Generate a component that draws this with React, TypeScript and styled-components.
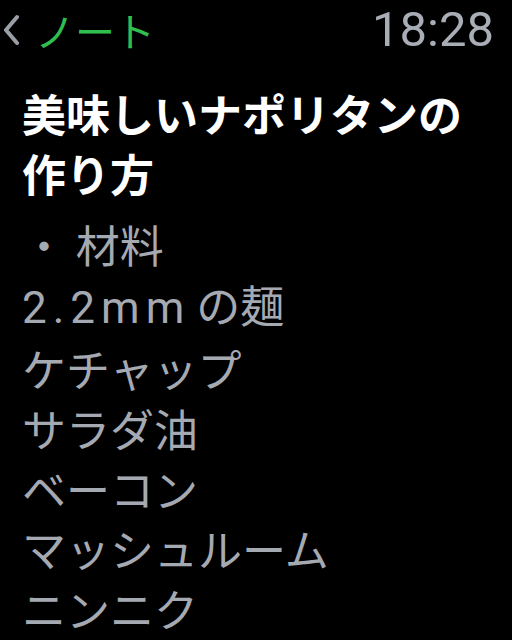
import React from 'react';
import styled, { createGlobalStyle } from 'styled-components';

const GlobalStyle = createGlobalStyle`
  html, body {
    margin: 0;
    padding: 0;
    background: #000;
  }
  body {
    width: 512px;
    height: 640px;
    overflow: hidden;
    font-family: "Noto Sans CJK JP", "Noto Sans", sans-serif;
  }
`;

const Screen = styled.div`
  width: 512px;
  height: 640px;
  background: #000;
  overflow: hidden;
`;

const Header = styled.header`
  display: flex;
  align-items: center;
  justify-content: space-between;
  height: 60px;
  padding: 0 18px 0 3px;
`;

const BackButton = styled.div`
  display: flex;
  align-items: center;
  gap: 16px;
`;

const BackLabel = styled.span`
  color: #2fbf4f;
  font-size: 40px;
  line-height: 60px;
`;

const Clock = styled.span`
  color: #a9adb5;
  font-family: Roboto, "Liberation Sans", sans-serif;
  font-size: 49px;
  line-height: 60px;
`;

const Body = styled.main`
  padding: 23px 22px 0;
`;

const Title = styled.h1`
  margin: 0 0 11px;
  color: #fff;
  font-size: 44px;
  font-weight: 700;
  line-height: 60px;
`;

const Line = styled.div`
  color: #a5a9b1;
  font-size: 44px;
  line-height: 60px;
  white-space: nowrap;
`;

const Latin = styled.span`
  font-family: Roboto, "Liberation Sans", sans-serif;
  letter-spacing: 6px;
  margin-right: 6px;
`;

const Chevron = () => (
  <svg width="16" height="32" viewBox="0 0 16 32">
    <polyline
      points="14,3 3,16 14,29"
      fill="none"
      stroke="#9a9ea6"
      strokeWidth="4"
      strokeLinecap="round"
      strokeLinejoin="round"
    />
  </svg>
);

const items = ['ケチャップ', 'サラダ油', 'ベーコン', 'マッシュルーム', 'ニンニク'];

export default function App() {
  return (
    <Screen>
      <GlobalStyle />
      <Header>
        <BackButton>
          <Chevron />
          <BackLabel>ノート</BackLabel>
        </BackButton>
        <Clock>18:28</Clock>
      </Header>
      <Body>
        <Title>
          美味しいナポリタンの
          <br />
          作り方
        </Title>
        <Line>・ 材料</Line>
        <Line>
          <Latin>2.2mm</Latin>の麺
        </Line>
        {items.map((t) => (
          <Line key={t}>{t}</Line>
        ))}
      </Body>
    </Screen>
  );
}
